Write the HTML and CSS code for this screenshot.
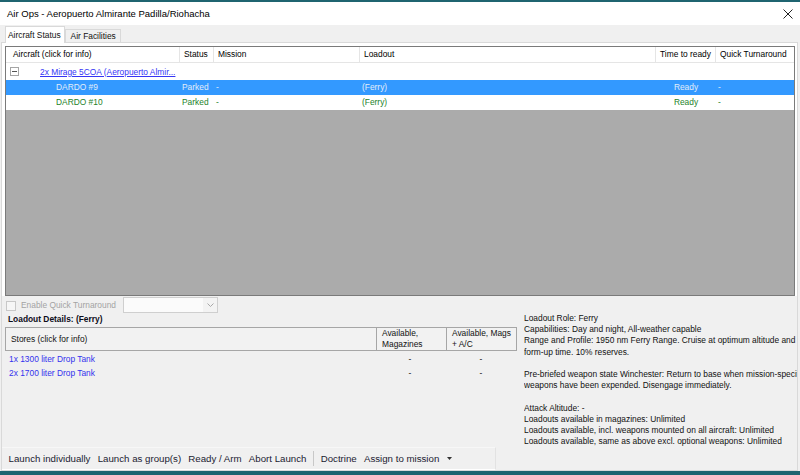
FILE: index.html
```html
<!DOCTYPE html>
<html>
<head>
<meta charset="utf-8">
<link rel="stylesheet" href="styles.css">
</head>
<body>
<div class="window">
  <div class="titlebar">
    <span class="title">Air Ops - Aeropuerto Almirante Padilla/Riohacha</span>
    <svg class="close" width="10" height="10" viewBox="0 0 10 10"><path d="M0.5 0.5 L9.5 9.5 M9.5 0.5 L0.5 9.5" stroke="#222" stroke-width="1" fill="none"/></svg>
  </div>
  <div class="tabs">
    <div class="tab active">Aircraft Status</div>
    <div class="tab">Air Facilities</div>
  </div>
  <div class="page">
    <div class="grid-wrap">
      <div class="grid">
        <div class="row head">
          <div class="c c1">Aircraft (click for info)</div>
          <div class="c">Status</div>
          <div class="c">Mission</div>
          <div class="c">Loadout</div>
          <div class="c">Time to ready</div>
          <div class="c last">Quick Turnaround</div>
        </div>
        <div class="row group">
          <div class="c c1"><span class="minus"></span><a class="link">2x Mirage 5COA (Aeropuerto Almir...</a></div>
        </div>
        <div class="row item sel">
          <div class="c c1 name">DARDO #9</div>
          <div class="c">Parked</div>
          <div class="c">-</div>
          <div class="c">(Ferry)</div>
          <div class="c ctr">Ready</div>
          <div class="c">-</div>
        </div>
        <div class="row item">
          <div class="c c1 name">DARDO #10</div>
          <div class="c">Parked</div>
          <div class="c">-</div>
          <div class="c">(Ferry)</div>
          <div class="c ctr">Ready</div>
          <div class="c">-</div>
        </div>
        <div class="fill"></div>
      </div>
    </div>
    <div class="lower">
      <div class="left">
        <div class="opts">
          <span class="check"></span>
          <span class="opt-label">Enable Quick Turnaround</span>
          <span class="combo"><span class="combo-field"></span><svg class="chev" width="7" height="4" viewBox="0 0 7 4"><path d="M0.5 0.5 L3.5 3.5 L6.5 0.5" stroke="#a8a8a8" fill="none"/></svg></span>
        </div>
        <div class="label">Loadout Details: (Ferry)</div>
        <div class="stores">
          <div class="shead">
            <div class="sc s1">Stores (click for info)</div>
            <div class="sc s2">Available,<br>Magazines</div>
            <div class="sc s3">Available, Mags<br>+ A/C</div>
          </div>
          <div class="srow">
            <div class="sc s1 store">1x 1300 liter Drop Tank</div>
            <div class="sc s2 dash">-</div>
            <div class="sc s3 dash">-</div>
          </div>
          <div class="srow">
            <div class="sc s1 store">2x 1700 liter Drop Tank</div>
            <div class="sc s2 dash">-</div>
            <div class="sc s3 dash">-</div>
          </div>
        </div>
      </div>
      <div class="info">
        <div>Loadout Role: Ferry</div>
        <div>Capabilities: Day and night, All-weather capable</div>
        <div>Range and Profile: 1950 nm Ferry Range. Cruise at optimum altitude and speed. No</div>
        <div>form-up time. 10% reserves.</div>
        <div class="blank"></div>
        <div>Pre-briefed weapon state Winchester: Return to base when mission-specific</div>
        <div>weapons have been expended. Disengage immediately.</div>
        <div class="blank"></div>
        <div>Attack Altitude: -</div>
        <div>Loadouts available in magazines: Unlimited</div>
        <div>Loadouts available, incl. weapons mounted on all aircraft: Unlimited</div>
        <div>Loadouts available, same as above excl. optional weapons: Unlimited</div>
      </div>
    </div>
    <div class="toolbar">
      <span class="tb">Launch individually</span>
      <span class="tb">Launch as group(s)</span>
      <span class="tb">Ready / Arm</span>
      <span class="tb">Abort Launch</span>
      <span class="sep"></span>
      <span class="tb">Doctrine</span>
      <span class="tb">Assign to mission <svg class="drop" width="5" height="3" viewBox="0 0 5 3"><path d="M0 0 H5 L2.5 3 Z" fill="#333"/></svg></span>
    </div>
  </div>
</div>
</body>
</html>
```
FILE: styles.css
```css
html, body {
  margin: 0;
  height: 100%;
}
body {
  background: #1f6470;
  font-family: "Liberation Sans", Arial, sans-serif;
  font-size: 8.4px;
  color: #111;
  overflow: hidden;
}
.window {
  margin-top: 2px;
  width: 800px;
  height: 469px;
  background: #f0f0f0;
  display: flex;
  flex-direction: column;
}
.titlebar {
  height: 23px;
  flex: none;
  background: #fff;
  display: flex;
  align-items: center;
  justify-content: space-between;
  padding: 0 7px 0 7px;
  font-size: 9.5px;
  color: #000;
}
.close {
  display: block;
}
.tabs {
  height: 17px;
  flex: none;
  display: flex;
  align-items: flex-end;
  padding-left: 5px;
  background: #f0f0f0;
}
.tab {
  height: 13px;
  box-sizing: border-box;
  border: 1px solid #d9d9d9;
  border-bottom: none;
  padding: 1px 4px 0 5px;
  line-height: 11px;
  background: #f0f0f0;
}
.tab.active {
  height: 17px;
  margin-bottom: -1px;
  padding: 3px 3px 0 2px;
  background: #fff;
  position: relative;
  z-index: 1;
}
.page {
  flex: 1;
  margin: 0 2px 0 1px;
  border: 1px solid #d9d9d9;
  display: flex;
  flex-direction: column;
  background: #f0f0f0;
}
.grid-wrap {
  background: #fff;
  padding: 3px 2px 0 3px;
  flex: none;
}
.grid {
  height: 250px;
  box-sizing: border-box;
  border: 1px solid #7a7a7a;
  display: flex;
  flex-direction: column;
  background: #fff;
}
.row {
  display: grid;
  grid-template-columns: 174px 34px 146px 296px 60px 1fr;
  flex: none;
}
.row.head {
  height: 16px;
  box-sizing: border-box;
  border-bottom: 1px solid #e5e5e5;
  color: #000;
}
.head .c {
  border-right: 1px solid #e5e5e5;
  padding-left: 4px;
  line-height: 15px;
  white-space: nowrap;
  overflow: hidden;
}
.head .c1 {
  padding-left: 7px;
}
.head .c.last {
  border-right: none;
}
.row.group {
  height: 17px;
  align-items: center;
}
.group .c1 {
  display: flex;
  align-items: center;
  padding-left: 4px;
  white-space: nowrap;
}
.minus {
  width: 9px;
  height: 9px;
  box-sizing: border-box;
  border: 1px solid #a5a5a5;
  position: relative;
  flex: none;
}
.minus::after {
  content: "";
  position: absolute;
  left: 1px;
  right: 1px;
  top: 3px;
  height: 1px;
  background: #555;
}
.link {
  margin-left: 21px;
  color: #3535f5;
  text-decoration: underline;
}
.row.item {
  height: 15px;
  line-height: 15px;
  color: #23822a;
}
.row.item.sel {
  background: #3399ff;
  color: #e2edf9;
}
.item .c {
  padding-left: 2px;
  white-space: nowrap;
  overflow: hidden;
}
.item .name {
  padding-left: 50px;
}
.item .ctr {
  text-align: center;
  padding-left: 0;
}
.fill {
  flex: 1;
  background: #ababab;
}
.lower {
  height: 151px;
  flex: none;
  display: flex;
  background: #f0f0f0;
}
.left {
  width: 512px;
  padding-left: 3px;
  flex: none;
}
.opts {
  margin-top: 1px;
  height: 16px;
  display: flex;
  align-items: center;
}
.check {
  width: 10px;
  height: 10px;
  box-sizing: border-box;
  border: 1px solid #c8c8c8;
  background: #f6f6f6;
  margin-left: 1px;
  margin-top: 1px;
}
.opt-label {
  margin-left: 5px;
  color: #a3a3a3;
}
.combo {
  margin-left: 7px;
  width: 95px;
  height: 16px;
  box-sizing: border-box;
  border: 1px solid #cfcfcf;
  background: #f3f3f3;
  display: flex;
  align-items: center;
}
.combo-field {
  width: 79px;
  height: 14px;
  background: #fbfbfb;
}
.chev {
  margin-left: 4px;
}
.label {
  height: 12px;
  line-height: 12px;
  padding-left: 3px;
  margin-bottom: 2px;
  font-weight: bold;
  color: #0d0d1a;
}
.shead {
  display: flex;
  height: 24px;
  box-sizing: border-box;
  border: 1px solid #a6a6a6;
  background: #f2f2f2;
  color: #111;
}
.sc {
  box-sizing: border-box;
  white-space: nowrap;
}
.s1 {
  width: 370px;
  padding-left: 5px;
}
.s2 {
  width: 70px;
  padding-left: 5px;
}
.s3 {
  flex: 1;
  padding-left: 5px;
}
.shead .sc {
  display: flex;
  align-items: center;
  line-height: 11px;
}
.shead .s2, .shead .s3 {
  border-left: 1px solid #a6a6a6;
}
.srow {
  display: flex;
  height: 14px;
  line-height: 14px;
}
.shead + .srow {
  margin-top: 1px;
}
.srow .s1 {
  padding-left: 4px;
}
.store {
  color: #3333ee;
}
.dash {
  text-align: center;
  padding-left: 0;
}
.srow .s3 {
  flex: none;
  width: 72px;
}
.info {
  flex: 1;
  min-width: 0;
  overflow: hidden;
  margin-left: 7px;
  padding-top: 17px;
  line-height: 11.2px;
  white-space: nowrap;
  color: #111;
}
.blank {
  height: 11.2px;
}
.toolbar {
  height: 23px;
  flex: none;
  width: 494px;
  box-sizing: border-box;
  display: flex;
  align-items: center;
  padding-left: 3px;
  font-size: 9.7px;
  color: #1b1b30;
  border-top: 1px solid #f7f7f7;
  border-bottom: 1px solid #fff;
  border-right: 1px solid #e2e2e2;
}
.tb {
  padding: 0 3.6px;
  white-space: nowrap;
  display: flex;
  align-items: center;
}
.sep {
  width: 1px;
  height: 15px;
  background: #c8c8c8;
  margin: 0 3px;
}
.drop {
  margin-left: 8px;
}
```
